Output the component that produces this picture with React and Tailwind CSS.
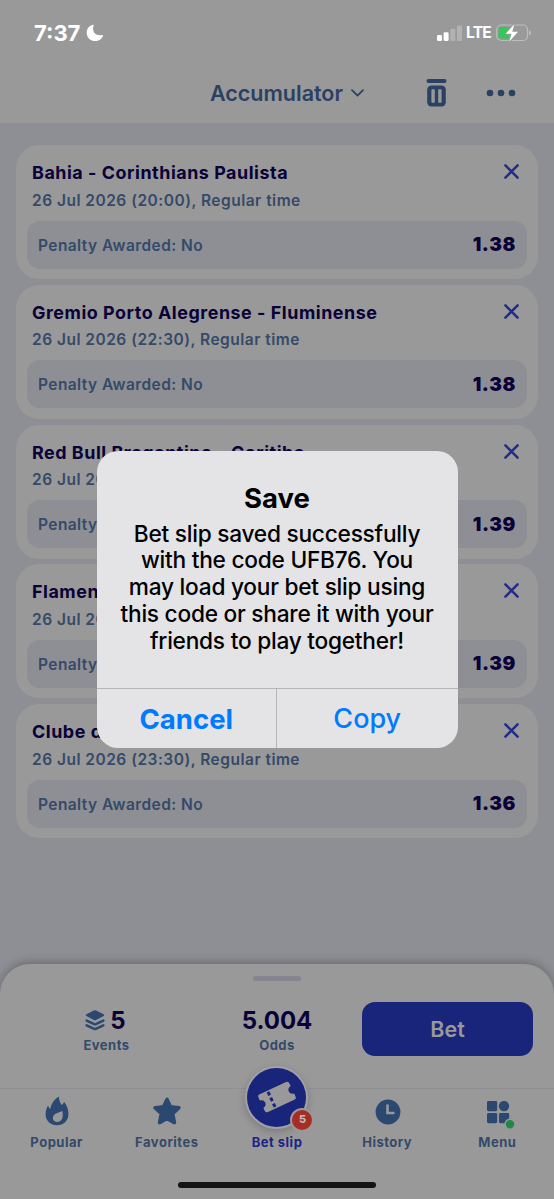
import clsx from "clsx";

const bets = [
  { match: "Bahia - Corinthians Paulista", time: "20:00", odds: "1.38" },
  { match: "Gremio Porto Alegrense - Fluminense", time: "22:30", odds: "1.38" },
  { match: "Red Bull Bragantino - Coritiba", time: "22:30", odds: "1.39" },
  { match: "Flamengo - Sao Paulo", time: "22:30", odds: "1.39" },
  { match: "Clube do Remo - Vitoria", time: "23:30", odds: "1.36" },
];

const StatusBar = () => (
  <div className="flex h-[66px] items-center justify-between pl-[34px] pr-[22px]">
    <div className="flex items-center gap-[6px] text-white">
      <span className="text-[22px] font-bold leading-6">7:37</span>
      <svg width="18" height="18" viewBox="0 0 18 18" fill="currentColor">
        <path d="M6.8.7C2.9 1.800.7 4.800.7 8.700c0 4.800 3.700 8.400 8.500 8.400 3.500 0 6.600-2 7.800-5.400.2-.6-.2-.9-.8-.7C10.500 12.700 5.300 8.300 7.600 1.600 7.900.9 7.500.5 6.800.7Z" />
      </svg>
    </div>
    <div className="flex items-center text-white">
      <svg width="25" height="16" viewBox="0 0 25 16" fill="currentColor">
        <rect x="0" y="10" width="5" height="6" rx="1.300" />
        <rect x="6.600" y="7.200" width="5" height="8.800" rx="1.300" />
        <rect x="13.300" y="3.800" width="5" height="12.200" rx="1.300" opacity=".25" />
        <rect x="20" y="0.500" width="5" height="15.500" rx="1.300" opacity=".25" />
      </svg>
      <span className="ml-1 text-[15.500px] font-bold leading-5 tracking-[-0.700px]">LTE</span>
      <svg className="ml-[5px]" width="36" height="20" viewBox="0 0 36 20">
        <rect x=".8" y="2" width="30.700" height="15.500" rx="4.500" fill="none" stroke="#bdbdbd" strokeWidth="1.200" />
        <path d="M5 4h8v11.500H5a2.500 2.500 0 0 1-2.500-2.500V6.500A2.500 2.500 0 0 1 5 4Z" fill="#34c759" />
        <path d="M33 7.500c1.500.3 2 1.300 2 2.300s-.5 2-2 2.300Z" fill="#bdbdbd" />
        <path d="M18.500 1 9.800 10.700h5.700L13.200 18.700l8.800-9.900h-5.800Z" fill="#fff" stroke="#999" strokeWidth="2.200" paintOrder="stroke" strokeLinejoin="round" />
      </svg>
    </div>
  </div>
);

const Header = () => (
  <header className="h-[123px] bg-[#999]">
    <StatusBar />
    <div className="flex h-[54px] items-center justify-end pr-[38px] text-[#2b4163]">
      <div className="flex items-center gap-[8px]">
        <span className="text-[21.500px] font-semibold leading-7">Accumulator</span>
        <svg width="13" height="8" viewBox="0 0 13 8" fill="none" stroke="currentColor" strokeWidth="1.800" strokeLinecap="round" strokeLinejoin="round">
          <path d="m1 1.200 5.500 5.500L12 1.200" />
        </svg>
      </div>
      <svg className="ml-[62px]" width="21" height="28" viewBox="0 0 21 28">
        <rect x="0.500" y="0" width="20" height="4" rx="2" fill="currentColor" />
        <rect x="1.200" y="6.500" width="18.600" height="21" rx="4.200" fill="currentColor" />
        <rect x="5.400" y="10.300" width="3.400" height="13.400" rx=".8" fill="#999" />
        <rect x="12.200" y="10.300" width="3.400" height="13.400" rx=".8" fill="#999" />
      </svg>
      <svg className="ml-[39px]" width="30" height="8" viewBox="0 0 30 8" fill="currentColor">
        <circle cx="4" cy="4" r="3.300" />
        <circle cx="15" cy="4" r="3.300" />
        <circle cx="26" cy="4" r="3.300" />
      </svg>
    </div>
  </header>
);

const BetCard = ({ bet }) => (
  <article className="h-[134px] rounded-[23px] bg-[#999] px-[11px] pt-[17px]">
    <div className="flex h-[58.500px] justify-between pl-[5px] pr-2">
      <div>
        <h2 className="whitespace-nowrap text-[17.900px] font-bold leading-[22px] tracking-[0.540px] text-[#0a0137]">{bet.match}</h2>
        <p className="mt-[5.500px] whitespace-nowrap text-[15.500px] font-semibold leading-[22px] tracking-[0.490px] text-[#344a68]">
          26 Jul 2026 ({bet.time}), Regular time
        </p>
      </div>
      <svg className="mt-[2px]" width="15" height="15" viewBox="0 0 15 15" stroke="#1f2c88" strokeWidth="2.500" strokeLinecap="round">
        <path d="m1.400 1.400 12.200 12.200M13.600 1.400 1.400 13.600" />
      </svg>
    </div>
    <div className="flex h-12 items-center justify-between rounded-[13px] bg-[#8d8f94] px-[11px] pt-[1.500px]">
      <span className="text-[15.500px] font-semibold tracking-[0.420px] text-[#344a68]">Penalty Awarded: No</span>
      <span className="text-[19px] font-black tracking-[0.600px] text-[#0a0137]">{bet.odds}</span>
    </div>
  </article>
);

const Summary = () => (
  <div className="flex h-[106px] items-start pt-[20px]">
    <div className="w-[213px] pt-[4px] text-center">
      <div className="flex h-[28px] items-center justify-center gap-[5px] pr-[2px]">
        <svg width="20" height="21" viewBox="0 0 20 21" fill="#2b4870">
          <path d="M8.900.4q1.100-.5 2.200 0l7.500 3.900q1.200.9 0 1.800l-7.500 3.900q-1.100.5-2.200 0L1.400 6.100q-1.200-.9 0-1.800Z" />
          <path d="M1.600 10.600 9.200 14.200q.8.300 1.600 0l7.600-3.600M1.600 15.300l7.600 3.600q.8.300 1.600 0l7.600-3.600" fill="none" stroke="#2b4870" strokeWidth="2.400" strokeLinecap="round" strokeLinejoin="round" />
        </svg>
        <span className="pt-[2px] text-[24px] font-bold leading-7 text-[#0a0137]">5</span>
      </div>
      <div className="mt-[1px] text-[13px] font-bold leading-5 tracking-[0.500px] text-[#344a68]">Events</div>
    </div>
    <div className="w-[128px] pt-[5px] text-center">
      <div className="h-[28px] text-[24px] font-bold leading-7 text-[#0a0137]">5.004</div>
      <div className="text-[13px] font-bold leading-5 tracking-[0.500px] text-[#344a68]">Odds</div>
    </div>
    <button className="ml-[21px] h-[54px] w-[171px] rounded-[13px] bg-[#18257b] text-[21.500px] font-semibold text-[#999]">
      Bet
    </button>
  </div>
);

const FlameIcon = () => (
  <svg width="24" height="30" viewBox="0 0 24 30" fill="#2b4870">
    <path fillRule="evenodd" d="M13.800.5c.1 4.300 1.600 6.500 2.900 8.500 1.400-1 1.900-2.100 2.300-3.300 2.900 3.400 4.400 7.600 4.400 12.300C23.400 24.800 18.400 29.300 12 29.300S.6 24.800.6 18c0-3.400 1.100-6.100 2.600-8.500.3 1.700.9 2.700 2 3.400C6.300 7.300 9.500 3.200 13.800.5ZM17.200 14.800c-2.600 2.100-7.500 1.900-9 5.700-1.100 3.100.9 5.400 3.800 5.400 5.200 0 6.800-4.900 5.200-11.100Z" />
  </svg>
);

const StarIcon = () => (
  <svg width="28" height="28" viewBox="0 0 28 28" fill="#2b4870" stroke="#2b4870" strokeWidth="3.600" strokeLinejoin="round">
    <path d="m14 2.400 3.500 7.500 8.400.9-6.200 5.900 1.700 8.900L14 21.400l-7.400 4.200 1.700-8.900-6.200-5.900 8.400-.9Z" />
  </svg>
);

const ClockIcon = () => (
  <svg className="ml-[2px] mt-[1px]" width="26" height="26" viewBox="0 0 26 26">
    <circle cx="13" cy="13" r="12.400" fill="#2b4870" />
    <path d="M12.500 5.500V14h7" fill="none" stroke="#999" strokeWidth="2.600" />
  </svg>
);

const MenuIcon = () => (
  <svg className="ml-[7px] mt-[7px]" width="28" height="28" viewBox="0 0 28 28" fill="#2b4870">
    <rect x="0" y="0" width="10.200" height="10.200" rx="1.400" />
    <circle cx="17" cy="5.100" r="5.200" />
    <rect x="0" y="12" width="10.200" height="10.200" rx="1.400" />
    <rect x="12" y="12" width="10.200" height="10.200" rx="1.400" />
    <circle cx="23" cy="23.200" r="4.200" fill="#228645" stroke="#999" strokeWidth="3" paintOrder="stroke" />
  </svg>
);

const TicketIcon = () => (
  <svg width="40" height="34" viewBox="0 0 40 34">
    <g transform="rotate(-25 20 17)">
      <path d="M5.500 7.200h29q2.500 0 2.500 2.500v3.100q-4 .8-4 4.200t4 4.200v3.100q0 2.500-2.500 2.500h-29Q3 26.800 3 24.300V21.200q4-.8 4-4.200t-4-4.200V9.700q0-2.500 2.500-2.500Z" fill="#999" />
      <path d="M14 8.600v17" stroke="#18257b" strokeWidth="3" strokeDasharray="3.800 2.600" />
    </g>
  </svg>
);

const BetSlipIcon = () => (
  <div className="relative flex h-[63px] w-[63px] items-center justify-center rounded-full border-2 border-[#a1a1a5] bg-[#18257b] shadow-[0_3px_8px_rgba(0,0,0,0.2)]">
    <TicketIcon />
    <span className="absolute -right-[8px] bottom-[-5px] flex h-6 w-6 items-center justify-center rounded-full border-[2.500px] border-[#999] bg-[#a72c25] text-[11px] font-extrabold text-[#bbb]">
      5
    </span>
  </div>
);

const tabs = [
  { label: "Popular", icon: <FlameIcon /> },
  { label: "Favorites", icon: <StarIcon /> },
  { label: "Bet slip", icon: <BetSlipIcon />, active: true },
  { label: "History", icon: <ClockIcon /> },
  { label: "Menu", icon: <MenuIcon /> },
];

const TabBar = () => (
  <nav className="h-[94px] border-t border-[#8f9093]">
    <div className="grid grid-cols-5 px-[1.500px]">
      {tabs.map(({ label, icon, active }) => (
        <div key={label} className="flex flex-col items-center">
          <div className={clsx("flex h-[44px] items-center justify-center", active && "-mt-[14px] mb-[14px]")}>{icon}</div>
          <span className={clsx("text-[13px] font-bold leading-[18px] tracking-[0.500px]", active ? "text-[#1a2487]" : "text-[#344a68]")}>
            {label}
          </span>
        </div>
      ))}
    </div>
  </nav>
);

const SaveDialog = () => (
  <div className="absolute left-[96.500px] top-[451px] flex h-[297px] w-[361px] flex-col overflow-hidden rounded-[21px] bg-[#e4e4e7] text-center text-black">
    <div className="h-[237px] pt-[32px]">
      <h1 className="text-[27.500px] font-bold leading-[30px]">Save</h1>
      <p className="mt-[7.500px] whitespace-nowrap text-[22.700px] font-medium leading-[26.800px] tracking-[-0.250px]">
        Bet slip saved successfully
        <br />
        with the code UFB76. You
        <br />
        may load your bet slip using
        <br />
        this code or share it with your
        <br />
        friends to play together!
      </p>
    </div>
    <div className="grid flex-1 grid-cols-2 border-t border-[#b5b5b8] text-[27px] text-[#007aff]">
      <button className="border-r border-[#b5b5b8] pt-[2px] text-[27.500px] font-bold">Cancel</button>
      <button className="pt-[2px] font-medium">Copy</button>
    </div>
  </div>
);

const App = () => (
  <div className="relative flex h-[1199px] w-[554px] flex-col overflow-hidden bg-[#8d8f94] font-['Inter',sans-serif]">
    <Header />
    <main className="flex flex-1 flex-col gap-[5.800px] px-4 pt-[22px]">
      {bets.map((bet) => (
        <BetCard key={bet.match} bet={bet} />
      ))}
    </main>
    <footer className="h-[235px] rounded-t-[30px] bg-[#999] shadow-[0_-2px_10px_rgba(0,0,0,0.25)]">
      <div className="flex h-[18px] items-end justify-center pb-[1px]">
        <div className="h-[5px] w-12 rounded-full bg-[#85858f]" />
      </div>
      <Summary />
      <TabBar />
      <div className="mx-auto h-[6px] w-[198px] rounded-full bg-[#141414]" />
    </footer>
    <SaveDialog />
  </div>
);

export default App;
